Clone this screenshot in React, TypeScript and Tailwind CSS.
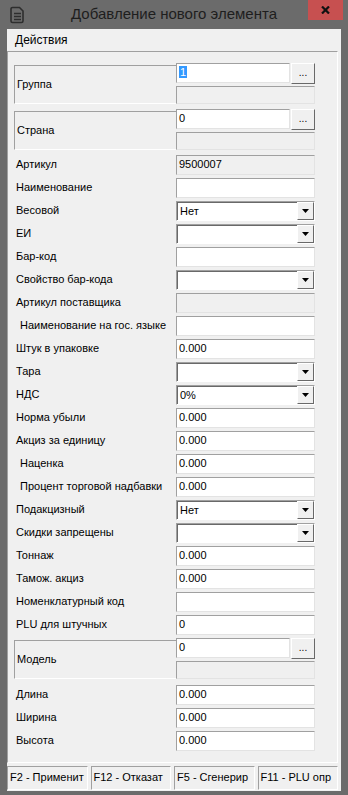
import React from "react";

type Row = {
    label: string;
    kind: "group" | "text" | "readonly" | "combo";
    value?: string;
    indent?: boolean;
    selected?: boolean;
    space?: string;
};

const rows: Row[] = [
    { label: "Группа", kind: "group", value: "1", selected: true, space: "mt-0" },
    { label: "Страна", kind: "group", value: "0", space: "mt-[5px]" },
    { label: "Артикул", kind: "readonly", value: "9500007", space: "mt-[5px]" },
    { label: "Наименование", kind: "text" },
    { label: "Весовой", kind: "combo", value: "Нет" },
    { label: "ЕИ", kind: "combo" },
    { label: "Бар-код", kind: "text" },
    { label: "Свойство бар-кода", kind: "combo" },
    { label: "Артикул поставщика", kind: "readonly" },
    { label: "Наименование на гос. языке", kind: "text", indent: true },
    { label: "Штук в упаковке", kind: "text", value: "0.000" },
    { label: "Тара", kind: "combo" },
    { label: "НДС", kind: "combo", value: "0%" },
    { label: "Норма убыли", kind: "text", value: "0.000" },
    { label: "Акциз за единицу", kind: "text", value: "0.000" },
    { label: "Наценка", kind: "text", value: "0.000", indent: true },
    { label: "Процент торговой надбавки", kind: "text", value: "0.000", indent: true },
    { label: "Подакцизный", kind: "combo", value: "Нет" },
    { label: "Скидки запрещены", kind: "combo" },
    { label: "Тоннаж", kind: "text", value: "0.000" },
    { label: "Тамож. акциз", kind: "text", value: "0.000" },
    { label: "Номенклатурный код", kind: "text" },
    { label: "PLU для штучных", kind: "text", value: "0" },
    { label: "Модель", kind: "group", value: "0" },
    { label: "Длина", kind: "text", value: "0.000", space: "mt-[6px]" },
    { label: "Ширина", kind: "text", value: "0.000" },
    { label: "Высота", kind: "text", value: "0.000" },
];

const statusItems = ["F2 - Применит", "F12 - Отказат", "F5 - Сгенерир", "F11 - PLU опр"];

const sunken =
    "border border-t-[#a0a0a0] border-l-[#a0a0a0] border-r-[#e3e3e3] border-b-[#e3e3e3]";

function Edit({ value, width = "w-[139px]", height = "h-[20px]", gray, selected }: { value?: string; width?: string; height?: string; gray?: boolean; selected?: boolean }) {
    return (
        <div
            className={`${width} ${height} ${sunken} ${gray ? "bg-[#f0f0f0]" : "bg-white"} pl-[2px] leading-[16px] text-black`}
        >
            {selected ? (
                <span className="bg-[#3399ff] text-white px-[1px]">{value}</span>
            ) : (
                value
            )}
        </div>
    );
}

function Combo({ value }: { value?: string }) {
    return (
        <div className="w-[139px] h-[20px] flex bg-white border border-t-[#a0a0a0] border-l-[#a0a0a0] border-r-white border-b-white shadow-[inset_1px_1px_0_#696969]">
            <div className="flex-1 pl-[3px] pt-[1px] leading-[17px] text-black">{value}</div>
            <div className="w-[17px] h-full flex items-center justify-center bg-[#f0f0f0] border border-t-white border-l-white border-r-[#696969] border-b-[#696969]">
                <svg width="7" height="4" viewBox="0 0 7 4">
                    <path d="M0 0h7L3.5 4z" fill="#000" />
                </svg>
            </div>
        </div>
    );
}

function Group({ row }: { row: Row }) {
    return (
        <div className="flex items-start">
            <div className="w-[162px] h-[39px] mt-[2px] flex items-center pl-[2px] border-t border-l border-b border-t-[#a0a0a0] border-l-[#a0a0a0] border-b-white">
                {row.label}
            </div>
            <div className="flex flex-col gap-[2px]">
                <div className="flex items-start gap-[1px] h-[21px]">
                    <Edit value={row.value} width="w-[114px]" selected={row.selected} />
                    <div className="w-[24px] h-[21px] flex items-center justify-center bg-[#f0f0f0] border border-t-white border-l-white border-r-[#696969] border-b-[#696969] text-[10px] leading-none pb-[2px]">
                        ...
                    </div>
                </div>
                <Edit gray height="h-[18px]" />
            </div>
        </div>
    );
}

function DocIcon() {
    return (
        <svg width="15" height="18" viewBox="0 0 15 18" fill="none" stroke="#2e2e2e" strokeWidth="1.6">
            <path d="M2.5 1.5h7l3.5 3.5v10a1.5 1.5 0 0 1-1.5 1.5h-9A1.5 1.5 0 0 1 1 15V3a1.5 1.5 0 0 1 1.5-1.5z" />
            <path d="M4 7.5h7M4 10.5h7M4 13.5h7" />
        </svg>
    );
}

export default function App() {
    return (
        <div
            className="w-[348px] h-[795px] bg-[#6b6b6b] flex flex-col text-[11px] text-black"
            style={{ fontFamily: '"Liberation Sans", Arial, sans-serif' }}
        >
            {/* title bar */}
            <div className="h-[29px] flex items-start relative">
                <div className="absolute left-[10px] top-[6px]">
                    <DocIcon />
                </div>
                <div className="flex-1 text-center text-[15px] leading-[28px] text-[#1e1e1e]">
                    Добавление нового элемента
                </div>
                <div className="absolute right-[5px] top-0 w-[35px] h-[20px] bg-[#c75050] flex items-center justify-center">
                    <svg width="9" height="8" viewBox="0 0 9 8">
                        <path d="M1 0.5l7 7M8 0.5l-7 7" stroke="#111" strokeWidth="2.2" />
                    </svg>
                </div>
            </div>

            <div className="flex-1 flex flex-col mx-[7px] bg-[#f0f0f0]">
                {/* menu */}
                <div className="h-[21px] flex items-center pl-[8px] text-[12px]">Действия</div>
                <div className="h-[1px]" />

                {/* form panel */}
                <div className="flex-1 mr-[3px] pt-[11px] pl-[6px] border border-t-[#a0a0a0] border-l-[#a0a0a0] border-r-white border-b-white flex flex-col">
                    {rows.map((row, index) => (
                        <div key={index} className={row.space ?? "mt-[3px]"}>
                            {row.kind === "group" ? (
                                <Group row={row} />
                            ) : (
                                <div className="flex items-center h-[20px]">
                                    <div className={`w-[162px] ${row.indent ? "pl-[6px]" : "pl-[2px]"} leading-[14px] pb-[2px]`}>
                                        {row.label}
                                    </div>
                                    {row.kind === "combo" ? (
                                        <Combo value={row.value} />
                                    ) : (
                                        <Edit value={row.value} gray={row.kind === "readonly"} />
                                    )}
                                </div>
                            )}
                        </div>
                    ))}
                </div>

                {/* status bar */}
                <div className="h-[28px] pt-[3px] pb-[1px] pr-[3px] grid grid-cols-4 gap-[3px]">
                    {statusItems.map((item, index) => (
                        <div
                            key={index}
                            className="border border-t-[#a0a0a0] border-l-[#a0a0a0] border-r-white border-b-white pl-[2px] text-[11px] leading-[20px] whitespace-nowrap overflow-hidden"
                        >
                            {item}
                        </div>
                    ))}
                </div>
            </div>
            <div className="h-[4px]" />
        </div>
    );
}
